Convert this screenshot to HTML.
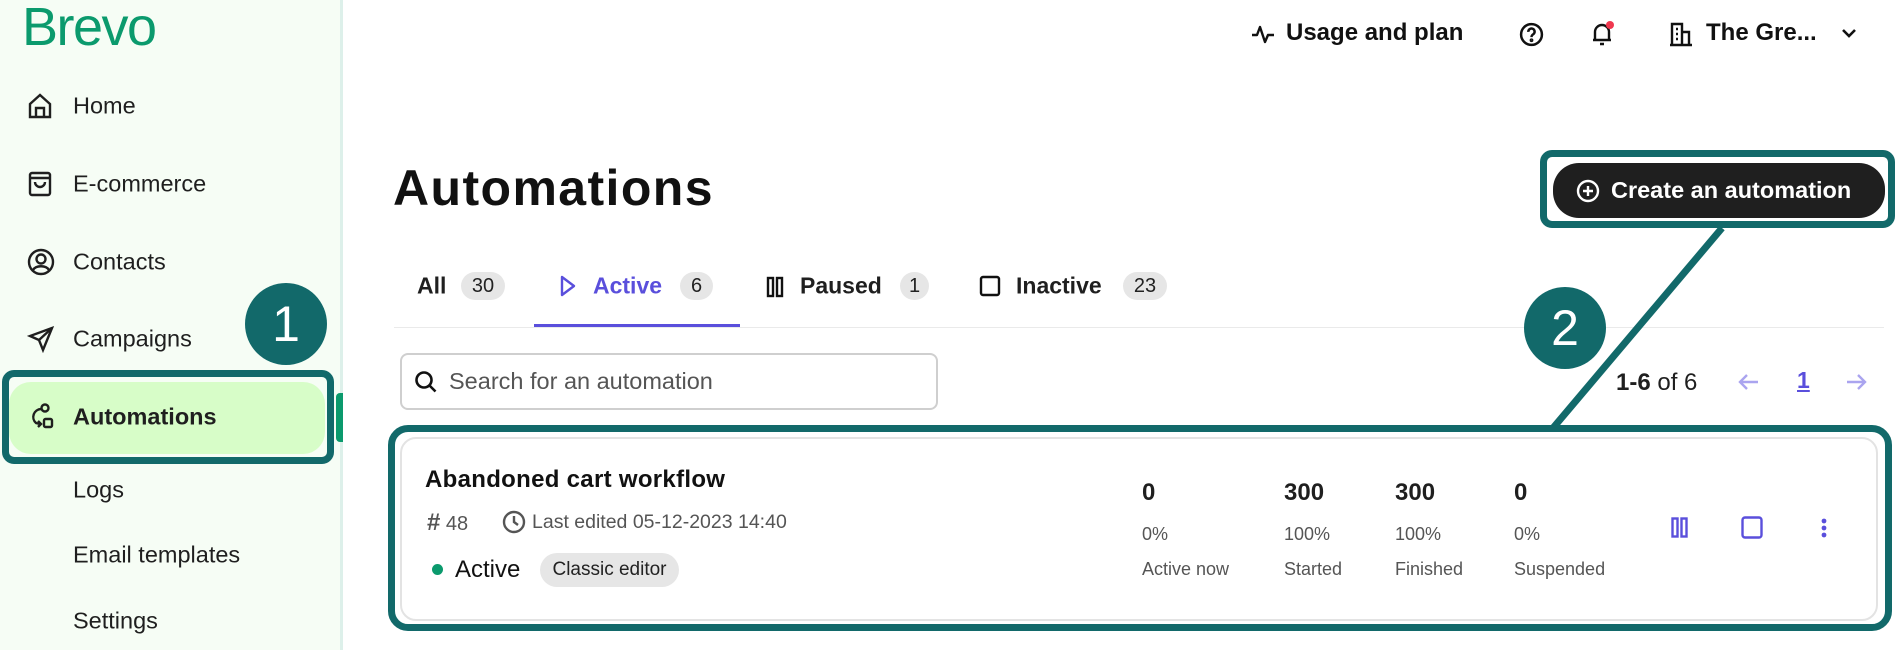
<!DOCTYPE html>
<html><head><meta charset="utf-8"><style>
*{margin:0;padding:0;box-sizing:border-box}
body{width:1902px;height:650px;overflow:hidden;background:#fff;font-family:"Liberation Sans",sans-serif;color:#1f1f1f;position:relative}
.a{position:absolute;white-space:nowrap}
.side{position:absolute;left:0;top:0;width:343px;height:650px;background:#f6fdf5;border-right:3px solid #ddf0ea}
.nav{position:absolute;left:73px;font-size:23.5px;color:#1f1f1f;transform:translateY(-50%)}
.ic{position:absolute;left:27px;transform:translateY(-50%)}
.badge{position:absolute;background:#e6e6e6;border-radius:14px;font-size:20px;height:28px;line-height:28px;text-align:center;transform:translateY(-50%);color:#222}
.tab{position:absolute;font-size:23px;font-weight:bold;transform:translateY(-50%)}
.g{color:#555}
.num{font-size:24px;font-weight:bold}
.pc{font-size:18px;color:#555}
</style></head><body>
<div class="side"></div>
<div class="a" style="left:22px;top:-4px;font-size:54px;color:#0b9a6d;letter-spacing:-1.5px">Brevo</div>

<svg class="ic" style="top:106px" width="26" height="28" viewBox="0 0 26 28" fill="none" stroke="#1f1f1f" stroke-width="2.4"><path d="M3 12L13 3l10 9v13H3z"/><path d="M9 25v-9h8v9"/></svg>
<div class="nav" style="top:106px">Home</div>
<svg class="ic" style="top:184px" width="26" height="28" viewBox="0 0 26 28" fill="none" stroke="#1f1f1f" stroke-width="2.4"><rect x="3" y="3" width="20" height="22" rx="2"/><path d="M3 8h20M8 12a5 5 0 0010 0"/></svg>
<div class="nav" style="top:184px">E-commerce</div>
<svg class="ic" style="top:262px" width="28" height="28" viewBox="0 0 28 28" fill="none" stroke="#1f1f1f" stroke-width="2.4"><circle cx="14" cy="14" r="12"/><circle cx="14" cy="11" r="4.5"/><path d="M6 22c3-5 13-5 16 0"/></svg>
<div class="nav" style="top:262px">Contacts</div>
<svg class="ic" style="top:339px" width="28" height="28" viewBox="0 0 28 28" fill="none" stroke="#1f1f1f" stroke-width="2.4"><path d="M25 3L3 11l9 4 4 10z"/><path d="M12 15l13-12"/></svg>
<div class="nav" style="top:339px">Campaigns</div>

<div class="a" style="left:2px;top:370px;width:332px;height:94px;border:7px solid #12696a;border-radius:12px"></div>
<div class="a" style="left:9px;top:382px;width:316px;height:72px;background:#d7fdc8;border-radius:22px"></div>
<div class="a" style="left:336px;top:393px;width:7px;height:49px;background:#0b9a6d;border-radius:4px 0 0 4px"></div>
<svg class="ic" style="top:417px" width="30" height="30" viewBox="0 0 30 30" fill="none" stroke="#1f1f1f" stroke-width="2.4"><circle cx="18" cy="6" r="3.5"/><path d="M14 7a8 8 0 00-5 14l4 1"/><path d="M11 19l3 3-3 3"/><rect x="17" y="17" width="8" height="8" rx="1.5"/></svg>
<div class="nav" style="top:417px;font-weight:bold">Automations</div>
<div class="nav" style="top:490px">Logs</div>
<div class="nav" style="top:555px">Email templates</div>
<div class="nav" style="top:621px">Settings</div>

<div class="a" style="left:245px;top:283px;width:82px;height:82px;border-radius:50%;background:#12696a;color:#fff;font-size:50px;text-align:center;line-height:82px">1</div>

<!-- header -->
<svg class="a" style="left:1251px;top:22px" width="24" height="24" viewBox="0 0 24 24" fill="none" stroke="#111" stroke-width="2.4" stroke-linejoin="round"><path d="M1 13h5l3-8 5 15 3-7h6"/></svg>
<div class="a" style="left:1286px;top:19px;font-size:24px;font-weight:bold;color:#111">Usage and plan</div>
<svg class="a" style="left:1519px;top:22px" width="25" height="25" viewBox="0 0 24 24" fill="none" stroke="#111" stroke-width="2.4"><circle cx="12" cy="12" r="10"/><path d="M9 9.5a3 3 0 115 2c-1.5 1-2 1.5-2 3"/><circle cx="12" cy="17.5" r="0.6" fill="#111"/></svg>
<svg class="a" style="left:1590px;top:20px" width="26" height="28" viewBox="0 0 26 28" fill="none" stroke="#111" stroke-width="2.4"><path d="M5 20V12a7 7 0 0114 0v8zM3 20h18M10 24h4"/><circle cx="20" cy="5" r="4" fill="#f0384f" stroke="none"/></svg>
<svg class="a" style="left:1669px;top:21px" width="24" height="26" viewBox="0 0 24 26" fill="none" stroke="#111" stroke-width="2.4"><path d="M3 24V3h10v21M13 11h7v13M1 24h22M7 8h2M7 13h2M7 18h2"/></svg>
<div class="a" style="left:1706px;top:19px;font-size:24px;font-weight:bold;color:#111">The Gre...</div>
<svg class="a" style="left:1840px;top:26px" width="18" height="14" viewBox="0 0 18 14" fill="none" stroke="#111" stroke-width="2.6"><path d="M3 4l6 6 6-6"/></svg>

<div class="a" style="left:393px;top:159px;font-size:50px;font-weight:bold;color:#111;letter-spacing:1.4px">Automations</div>

<!-- tabs -->
<div class="tab" style="left:417px;top:286px">All</div>
<div class="badge" style="left:461px;top:286px;width:44px">30</div>
<svg class="a" style="left:558px;top:274px" width="20" height="24" viewBox="0 0 20 24" fill="none" stroke="#5a4fdc" stroke-width="2.4" stroke-linejoin="round"><path d="M4 3l12 9-12 9z"/></svg>
<div class="tab" style="left:593px;top:286px;color:#5a4fdc">Active</div>
<div class="badge" style="left:680px;top:286px;width:33px">6</div>
<div class="a" style="left:534px;top:324px;width:206px;height:4px;background:#5a4fdc"></div>
<svg class="a" style="left:766px;top:276px" width="18" height="22" viewBox="0 0 18 22" fill="none" stroke="#111" stroke-width="2.4"><rect x="2" y="2" width="5" height="18"/><rect x="11" y="2" width="5" height="18"/></svg>
<div class="tab" style="left:800px;top:286px">Paused</div>
<div class="badge" style="left:900px;top:286px;width:29px">1</div>
<svg class="a" style="left:979px;top:275px" width="22" height="22" viewBox="0 0 22 22" fill="none" stroke="#111" stroke-width="2.4"><rect x="2" y="2" width="18" height="18" rx="2"/></svg>
<div class="tab" style="left:1016px;top:286px">Inactive</div>
<div class="badge" style="left:1123px;top:286px;width:44px">23</div>
<div class="a" style="left:394px;top:327px;width:1490px;height:1px;background:#eaeaea"></div>

<div class="a" style="left:1540px;top:150px;width:355px;height:78px;border:7px solid #12696a;border-radius:12px"></div>
<div class="a" style="left:1553px;top:163px;width:332px;height:55px;background:#1f1f1f;border-radius:26px"></div>
<svg class="a" style="left:1576px;top:179px" width="24" height="24" viewBox="0 0 24 24" fill="none" stroke="#fff" stroke-width="2.4"><circle cx="12" cy="12" r="10"/><path d="M12 7v10M7 12h10"/></svg>
<div class="a" style="left:1611px;top:177px;font-size:23.5px;font-weight:bold;color:#fff">Create an automation</div>
<svg class="a" style="left:0;top:0" width="1902" height="650"><line x1="1722" y1="228" x2="1553" y2="428" stroke="#12696a" stroke-width="7"/></svg>
<div class="a" style="left:1524px;top:287px;width:82px;height:82px;border-radius:50%;background:#12696a;color:#fff;font-size:50px;text-align:center;line-height:82px">2</div>

<!-- search -->
<div class="a" style="left:400px;top:353px;width:538px;height:57px;border:2px solid #cfcfcf;border-radius:8px"></div>
<svg class="a" style="left:414px;top:370px" width="24" height="24" viewBox="0 0 24 24" fill="none" stroke="#111" stroke-width="2.6"><circle cx="10" cy="10" r="7.5"/><path d="M15.5 15.5l6 6"/></svg>
<div class="a g" style="left:449px;top:368px;font-size:23.5px">Search for an automation</div>

<div class="a" style="left:1616px;top:369px;font-size:24px"><b>1-6</b> of 6</div>
<svg class="a" style="left:1737px;top:372px" width="24" height="20" viewBox="0 0 24 20" fill="none" stroke="#aaa4ef" stroke-width="2.4"><path d="M21 10H3M10 3l-7 7 7 7"/></svg>
<div class="a" style="left:1797px;top:367px;font-size:23px;font-weight:bold;color:#5a4fdc;text-decoration:underline">1</div>
<svg class="a" style="left:1844px;top:372px" width="24" height="20" viewBox="0 0 24 20" fill="none" stroke="#aaa4ef" stroke-width="2.4"><path d="M3 10h18M14 3l7 7-7 7"/></svg>

<!-- card -->
<div class="a" style="left:388px;top:425px;width:1504px;height:206px;border:7px solid #12696a;border-radius:20px"></div>
<div class="a" style="left:400px;top:437px;width:1478px;height:184px;border:2px solid #e3e3e3;border-radius:16px"></div>
<div class="a" style="left:425px;top:466px;font-size:24px;font-weight:bold;color:#111;letter-spacing:0.3px">Abandoned cart workflow</div>
<div class="a g" style="left:427px;top:509px;font-size:20px"><b style="font-size:24px">#</b> 48</div>
<svg class="a" style="left:502px;top:510px" width="24" height="24" viewBox="0 0 24 24" fill="none" stroke="#555" stroke-width="2.4"><circle cx="12" cy="12" r="10"/><path d="M12 6v6l4 3"/></svg>
<div class="a g" style="left:532px;top:511px;font-size:19.5px">Last edited 05-12-2023 14:40</div>
<div class="a" style="left:432px;top:564px;width:11px;height:11px;border-radius:50%;background:#0b9a6d"></div>
<div class="a" style="left:455px;top:556px;font-size:24px;color:#111">Active</div>
<div class="a" style="left:540px;top:553px;width:139px;height:34px;background:#e6e6e6;border-radius:17px;font-size:19px;line-height:34px;text-align:center;color:#222">Classic editor</div>

<div class="a num" style="left:1142px;top:479px">0</div>
<div class="a pc" style="left:1142px;top:524px">0%</div>
<div class="a pc" style="left:1142px;top:559px">Active now</div>
<div class="a num" style="left:1284px;top:479px">300</div>
<div class="a pc" style="left:1284px;top:524px">100%</div>
<div class="a pc" style="left:1284px;top:559px">Started</div>
<div class="a num" style="left:1395px;top:479px">300</div>
<div class="a pc" style="left:1395px;top:524px">100%</div>
<div class="a pc" style="left:1395px;top:559px">Finished</div>
<div class="a num" style="left:1514px;top:479px">0</div>
<div class="a pc" style="left:1514px;top:524px">0%</div>
<div class="a pc" style="left:1514px;top:559px">Suspended</div>

<svg class="a" style="left:1671px;top:517px" width="18" height="21" viewBox="0 0 18 21" fill="none" stroke="#5a4fdc" stroke-width="2.4"><rect x="1.5" y="1.5" width="5" height="18"/><rect x="10.5" y="1.5" width="5" height="18"/></svg>
<svg class="a" style="left:1741px;top:516px" width="22" height="23" viewBox="0 0 22 23" fill="none" stroke="#5a4fdc" stroke-width="2.4"><rect x="1.5" y="1.5" width="19" height="20" rx="2.5"/></svg>
<svg class="a" style="left:1819px;top:517px" width="10" height="22" viewBox="0 0 10 22" fill="#5a4fdc"><circle cx="5" cy="4" r="2.4"/><circle cx="5" cy="11" r="2.4"/><circle cx="5" cy="18" r="2.4"/></svg>
</body></html>
